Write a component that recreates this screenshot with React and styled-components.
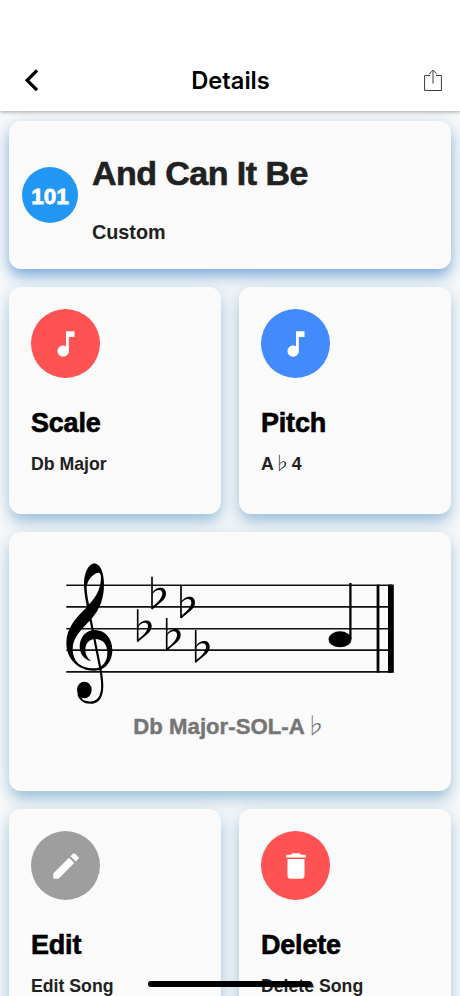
import React from "react";
import styled, { createGlobalStyle } from "styled-components";
import { MdMusicNote, MdEdit, MdDelete } from "react-icons/md";

//조표 위치
const flats = [
  [137.7, 609.3],
  [152, 576.7],
  [166.7, 618],
  [181, 585.7],
  [195.7, 630],
];

const staffLines = [585.2, 606.9, 628.8, 650.1, 671.9];

const BackIcon = () => (
  <svg width="16" height="24" viewBox="0 0 16 24">
    <path d="M14 1.4 L4.2 11.3 L14 21.2" fill="none" stroke="#000" strokeWidth="3.3" />
  </svg>
);

const ShareIcon = () => (
  <svg width="20" height="24" viewBox="0 0 20 24">
    <path
      d="M7.2 6.5H1.6V21.5H18.4V6.5H12.8M10 14.6V1.4M6 5.2L10 1.2L14 5.2"
      fill="none"
      stroke="#3c3c3c"
      strokeWidth="1"
    />
  </svg>
);

const Staff = () => (
  <svg width="340" height="150" viewBox="60 560 340 150">
    {staffLines.map((y) => (
      <path key={y} d={`M66.3 ${y}H392`} stroke="#111" strokeWidth="1.6" />
    ))}

    {/* 높은음자리표 */}
    <g transform="translate(50 550) scale(0.33333)">
      <path
        fillRule="evenodd"
        d="M133 40C113 42 101 75 102 105C103 135 108 155 111 172C80 200 49 235 49 278C49 330 88 362 132 362C168 362 187 332 187 300C187 265 165 240 135 240C108 240 89 262 89 290C89 312 103 328 123 334C112 324 106 313 106 300C106 280 118 267 136 267C157 267 172 282 172 308C172 338 155 355 130 355C92 355 68 335 68 297C68 262 94 238 122 209C152 178 162 140 162 103C162 70 152 42 133 40ZM145 68C153 68 154 80 152 95C149 120 138 142 117 163C114 150 110 130 110 112C111 92 128 70 145 68Z"
      />
      <path
        d="M120 200L150 350C156 385 159 400 156 420C153 445 140 458 120 458C103 458 89 448 85 432"
        fill="none"
        stroke="#000"
        strokeWidth="6.5"
      />
      <ellipse cx="103" cy="420" rx="22" ry="25" />
    </g>

    {flats.map(([x, y]) => (
      <g key={x} transform={`translate(${x} ${y}) scale(0.33333)`}>
        <path d="M0 0V97" stroke="#000" strokeWidth="5" />
        <path
          fillRule="evenodd"
          d="M0 51C10 29 42 26 42 51C42 70 20 80 0 99V91C14 80 31 66 31 50C31 36 10 36 0 55Z"
        />
      </g>
    ))}

    <ellipse cx="340" cy="639.3" rx="11.4" ry="8" />
    <path d="M350.4 583V639" stroke="#000" strokeWidth="2.3" />
    <path d="M378 584.6V672.6" stroke="#000" strokeWidth="2.8" />
    <path d="M390.9 584.6V672.8" stroke="#000" strokeWidth="5.8" />
  </svg>
);

const InfoCard = ({ color, icon, title, children }) => (
  <SmallCard>
    <IconCircle $color={color}>{icon}</IconCircle>
    <CardTitle>{title}</CardTitle>
    <CardText>{children}</CardText>
  </SmallCard>
);

const App = () => {
  return (
    <Screen>
      <GlobalStyle />
      <Header>
        <BackIcon />
        <HeaderTitle>Details</HeaderTitle>
        <ShareIcon />
      </Header>
      <Content>
        <SongCard>
          <NumberCircle>101</NumberCircle>
          <div>
            <SongTitle>And Can It Be</SongTitle>
            <SongBook>Custom</SongBook>
          </div>
        </SongCard>
        <CardRow>
          <InfoCard color="#ff5252" icon={<MdMusicNote />} title="Scale">
            Db Major
          </InfoCard>
          <InfoCard color="#448aff" icon={<MdMusicNote />} title="Pitch">
            A<FlatSign $size={18}>♭</FlatSign>4
          </InfoCard>
        </CardRow>
        <StaffCard>
          <Staff />
          <StaffText>
            Db Major-SOL-A<FlatSign $size={23}>♭</FlatSign>
          </StaffText>
        </StaffCard>
        <CardRow>
          <InfoCard color="#9e9e9e" icon={<MdEdit />} title="Edit">
            Edit Song
          </InfoCard>
          <InfoCard color="#ff5252" icon={<MdDelete />} title="Delete">
            Delete Song
          </InfoCard>
        </CardRow>
      </Content>
      <HomeBar />
    </Screen>
  );
};

export default App;

const GlobalStyle = createGlobalStyle`
  body {
    margin: 0;
    background: #fff;
    font-family: "Liberation Sans", Arial, sans-serif;
  }
  * {
    box-sizing: border-box;
  }
`;

const Screen = styled.div`
  position: relative;
  height: 996px;
  overflow: hidden;
  background: #fafafa;
`;

const Header = styled.header`
  position: relative;
  z-index: 1;
  display: flex;
  align-items: center;
  justify-content: space-between;
  height: 111px;
  padding: 50px 17px 0 23px;
  background: #fff;
  box-shadow: 0 1px 4px rgba(0, 0, 0, 0.35);
`;

const HeaderTitle = styled.h1`
  margin: 0 0 0 -1px;
  font-family: Inter, sans-serif;
  font-size: 23.7px;
  font-weight: 600;
`;

const Content = styled.main`
  display: flex;
  flex-direction: column;
  gap: 18px;
  padding: 10px 9px;
`;

const Card = styled.section`
  border-radius: 12px;
  background: #fafafa;
  box-shadow: 0 8px 12px -2px rgba(60, 125, 175, 0.34),
    0 6px 20px 3px rgba(80, 150, 200, 0.24);
`;

const SongCard = styled(Card)`
  display: flex;
  align-items: center;
  gap: 14px;
  height: 148px;
  padding: 0 13px;
  box-shadow: 0 7px 12px -2px rgba(30, 105, 190, 0.45),
    0 6px 20px 3px rgba(60, 140, 205, 0.28);
`;

const NumberCircle = styled.div`
  display: flex;
  align-items: center;
  justify-content: center;
  width: 56px;
  height: 56px;
  padding-top: 3px;
  border-radius: 50%;
  background: #2196f3;
  color: #fff;
  font-size: 22.5px;
  font-weight: 700;
  -webkit-text-stroke: 0.8px #fff;
`;

const SongTitle = styled.h2`
  margin: 6px 0 27px;
  color: #212121;
  font-size: 34px;
  line-height: 40px;
  letter-spacing: -0.55px;
  -webkit-text-stroke: 0.6px #212121;
`;

const SongBook = styled.p`
  margin: 0;
  color: #212121;
  font-size: 19.8px;
  font-weight: 600;
  line-height: 24px;
`;

const CardRow = styled.div`
  display: grid;
  grid-template-columns: 1fr 1fr;
  gap: 18px;
`;

const SmallCard = styled(Card)`
  height: 227px;
  padding: 22px;
`;

const IconCircle = styled.div`
  display: flex;
  align-items: center;
  justify-content: center;
  width: 69px;
  height: 69px;
  border-radius: 50%;
  background: ${(props) => props.$color};
  color: #fff;
  font-size: 34px;
`;

const CardTitle = styled.h3`
  margin: 29px 0 13px;
  color: #000;
  font-size: 27px;
  line-height: 32px;
  letter-spacing: -0.2px;
  -webkit-text-stroke: 0.6px #000;
`;

const CardText = styled.p`
  margin: 0;
  color: #212121;
  font-size: 17.7px;
  font-weight: 600;
  line-height: 24px;
`;

const StaffCard = styled(Card)`
  display: flex;
  flex-direction: column;
  align-items: center;
  height: 259px;
  padding-top: 28px;
`;

const StaffText = styled.p`
  margin: 3px 0 0;
  color: #757575;
  font-size: 22.2px;
  font-weight: 700;
  line-height: 28px;
  white-space: nowrap;
  -webkit-text-stroke: 0.4px #757575;
`;

const FlatSign = styled.span`
  display: inline-block;
  margin-left: -1px;
  padding-right: ${(props) => (props.$size > 20 ? 0 : 1)}px;
  font-family: "Noto Sans CJK JP", "DejaVu Sans", sans-serif;
  font-size: ${(props) => props.$size}px;
  font-weight: 300;
  line-height: 1;
  -webkit-text-stroke: 0;
`;

const HomeBar = styled.div`
  position: absolute;
  bottom: 9px;
  left: 148px;
  width: 164px;
  height: 6px;
  border-radius: 3px;
  background: #000;
`;
